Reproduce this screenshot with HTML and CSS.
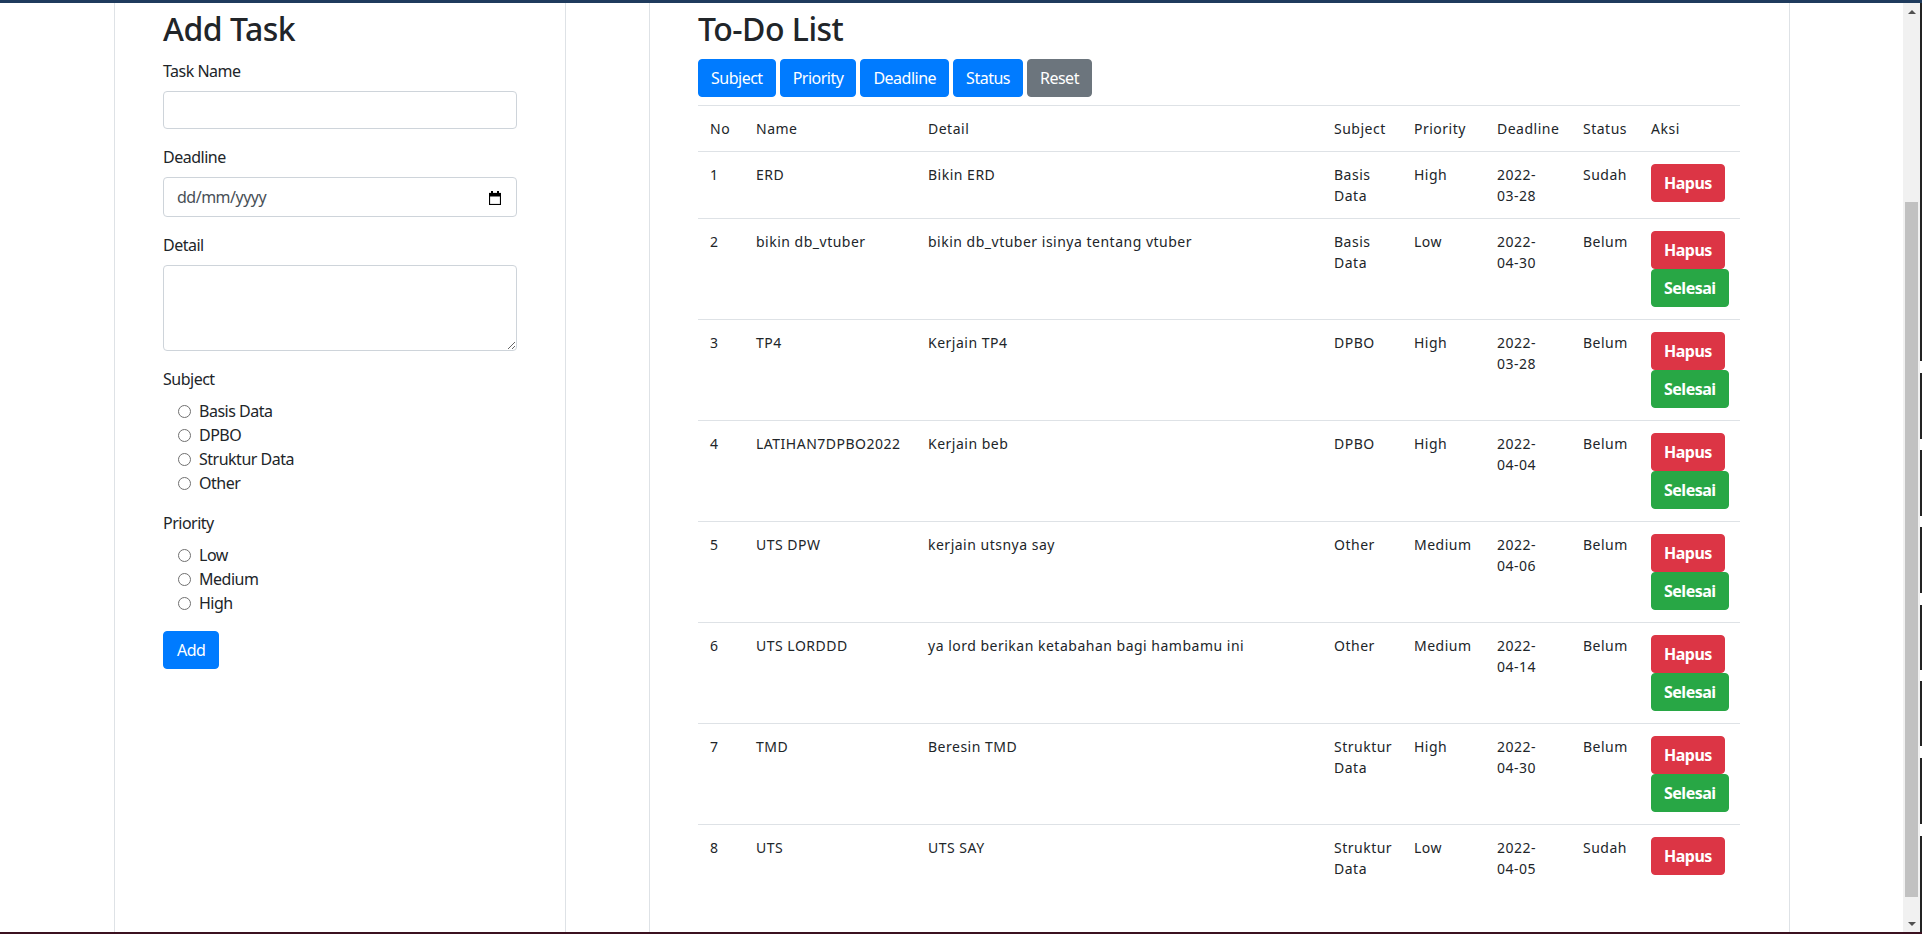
FILE: index.html
```html
<!DOCTYPE html>
<html lang="id">
<head>
<meta charset="utf-8">
<title>To-Do List</title>
<link rel="stylesheet" href="styles.css">
</head>
<body>
<div class="window">
  <div class="topbar"></div>
  <div class="middle">
    <div class="viewport">
      <div class="col col-left">
        <h2 class="title">Add Task</h2>
        <form class="form">
          <div class="form-group">
            <label class="label">Task Name</label>
            <input class="form-control" type="text">
          </div>
          <div class="form-group">
            <label class="label">Deadline</label>
            <div class="form-control date">
              <span class="date-ph">dd/mm/yyyy</span>
              <svg class="cal" width="12" height="14" viewBox="0 0 12 14"><rect x="2" y="0" width="2" height="3" fill="#000"/><rect x="8" y="0" width="2" height="3" fill="#000"/><rect x="0.5" y="2.5" width="11" height="11" fill="none" stroke="#000" stroke-width="1.2"/><rect x="0.5" y="2.5" width="11" height="3" fill="#000"/></svg>
            </div>
          </div>
          <div class="form-group">
            <label class="label">Detail</label>
            <textarea class="form-control textarea" rows="3"></textarea>
          </div>
          <div class="form-group">
            <div class="label">Subject</div>
            <label class="check"><input class="radio" type="radio" name="subject"><span>Basis Data</span></label>
            <label class="check"><input class="radio" type="radio" name="subject"><span>DPBO</span></label>
            <label class="check"><input class="radio" type="radio" name="subject"><span>Struktur Data</span></label>
            <label class="check"><input class="radio" type="radio" name="subject"><span>Other</span></label>
          </div>
          <div class="form-group">
            <div class="label">Priority</div>
            <label class="check"><input class="radio" type="radio" name="priority"><span>Low</span></label>
            <label class="check"><input class="radio" type="radio" name="priority"><span>Medium</span></label>
            <label class="check"><input class="radio" type="radio" name="priority"><span>High</span></label>
          </div>
          <button class="btn btn-primary btn-add" type="button">Add</button>
        </form>
      </div>
      <div class="col col-right">
        <h2 class="title">To-Do List</h2>
        <div class="toolbar">
          <button class="btn btn-primary" type="button">Subject</button>
          <button class="btn btn-primary" type="button">Priority</button>
          <button class="btn btn-primary" type="button">Deadline</button>
          <button class="btn btn-primary" type="button">Status</button>
          <button class="btn btn-secondary" type="button">Reset</button>
        </div>
        <table class="table">
          <colgroup>
            <col class="c-no"><col class="c-name"><col class="c-detail"><col class="c-subject"><col class="c-priority"><col class="c-deadline"><col class="c-status"><col class="c-aksi">
          </colgroup>
          <thead>
            <tr><th>No</th><th>Name</th><th>Detail</th><th>Subject</th><th>Priority</th><th>Deadline</th><th>Status</th><th>Aksi</th></tr>
          </thead>
          <tbody>
            <tr><td>1</td><td>ERD</td><td>Bikin ERD</td><td>Basis Data</td><td>High</td><td>2022-<span class="nw">03-28</span></td><td>Sudah</td><td><div class="actions"><button class="btn btn-bold btn-danger" type="button">Hapus</button></div></td></tr>
            <tr><td>2</td><td>bikin db_vtuber</td><td>bikin db_vtuber isinya tentang vtuber</td><td>Basis Data</td><td>Low</td><td>2022-<span class="nw">04-30</span></td><td>Belum</td><td><div class="actions"><button class="btn btn-bold btn-danger" type="button">Hapus</button><button class="btn btn-bold btn-success" type="button">Selesai</button></div></td></tr>
            <tr><td>3</td><td>TP4</td><td>Kerjain TP4</td><td>DPBO</td><td>High</td><td>2022-<span class="nw">03-28</span></td><td>Belum</td><td><div class="actions"><button class="btn btn-bold btn-danger" type="button">Hapus</button><button class="btn btn-bold btn-success" type="button">Selesai</button></div></td></tr>
            <tr><td>4</td><td>LATIHAN7DPBO2022</td><td>Kerjain beb</td><td>DPBO</td><td>High</td><td>2022-<span class="nw">04-04</span></td><td>Belum</td><td><div class="actions"><button class="btn btn-bold btn-danger" type="button">Hapus</button><button class="btn btn-bold btn-success" type="button">Selesai</button></div></td></tr>
            <tr><td>5</td><td>UTS DPW</td><td>kerjain utsnya say</td><td>Other</td><td>Medium</td><td>2022-<span class="nw">04-06</span></td><td>Belum</td><td><div class="actions"><button class="btn btn-bold btn-danger" type="button">Hapus</button><button class="btn btn-bold btn-success" type="button">Selesai</button></div></td></tr>
            <tr><td>6</td><td>UTS LORDDD</td><td>ya lord berikan ketabahan bagi hambamu ini</td><td>Other</td><td>Medium</td><td>2022-<span class="nw">04-14</span></td><td>Belum</td><td><div class="actions"><button class="btn btn-bold btn-danger" type="button">Hapus</button><button class="btn btn-bold btn-success" type="button">Selesai</button></div></td></tr>
            <tr><td>7</td><td>TMD</td><td>Beresin TMD</td><td>Struktur Data</td><td>High</td><td>2022-<span class="nw">04-30</span></td><td>Belum</td><td><div class="actions"><button class="btn btn-bold btn-danger" type="button">Hapus</button><button class="btn btn-bold btn-success" type="button">Selesai</button></div></td></tr>
            <tr><td>8</td><td>UTS</td><td>UTS SAY</td><td>Struktur Data</td><td>Low</td><td>2022-<span class="nw">04-05</span></td><td>Sudah</td><td><div class="actions"><button class="btn btn-bold btn-danger" type="button">Hapus</button></div></td></tr>
          </tbody>
        </table>
      </div>
    </div>
    <div class="scrollbar">
      <div class="sb-arrow"><span class="tri-up"></span></div>
      <div class="sb-track"><div class="sb-thumb"></div></div>
      <div class="sb-arrow"><span class="tri-down"></span></div>
    </div>
    <div class="edge"></div>
  </div>
  <div class="bottombar"></div>
</div>
</body>
</html>
```

FILE: styles.css
```css
* { box-sizing: border-box; }
html, body { margin: 0; height: 100%; }
body {
  font-family: "Noto Sans", "Open Sans", sans-serif;
  color: #212529;
  background: #fff;
  overflow: hidden;
  letter-spacing: -0.5px;
}
.window { display: flex; flex-direction: column; width: 1922px; height: 934px; }
.topbar { flex: none; height: 3px; background: #1f3b5d; }
.bottombar { flex: none; height: 2px; background: #3b1120; }
.middle { flex: 1; display: flex; min-height: 0; }
.viewport { flex: 1; display: flex; gap: 83px; padding-left: 114px; background: #fff; }

.col { border-left: 1px solid #dee2e6; border-right: 1px solid #dee2e6; padding: 7px 48px 0; }
.col-left { width: 452px; }
.col-right { width: 1141px; }

.title { font-size: 32px; font-weight: 500; line-height: 38.4px; margin: 0 0 11px; letter-spacing: -0.5px; }

.form-group { margin-bottom: 16px; }
.label { display: block; font-size: 16px; line-height: 24px; margin-bottom: 8px; }
.form-control {
  display: block; width: 100%; height: 38px; padding: 6px 12px;
  font: inherit; font-size: 16px; line-height: 24px; color: #495057;
  border: 1px solid #ced4da; border-radius: 4px; background: #fff;
}
.date { height: 40px; display: flex; align-items: center; justify-content: space-between; padding: 0 15px 0 13px; }
.date-ph { color: #495057; }
.cal { display: block; margin-top: 1px; }
.textarea { height: 86px; resize: vertical; }

.check { display: flex; align-items: center; height: 24px; padding-left: 15px; gap: 8px; font-size: 16px; line-height: 24px; }
.radio {
  appearance: none; -webkit-appearance: none; margin: 0;
  width: 13px; height: 13px; border: 1px solid #707070; border-radius: 50%; background: #fff; flex: none;
}

.btn {
  display: inline-block; font: inherit; font-size: 16px; line-height: 24px; letter-spacing: -0.5px;
  padding: 6px 12px; border: 1px solid transparent; border-radius: 4px; color: #fff; cursor: pointer;
}
.btn-add { padding: 6px 13px; }
.btn-primary { background: #007bff; border-color: #007bff; }
.btn-secondary { background: #6c757d; border-color: #6c757d; }
.btn-danger { background: #dc3545; border-color: #dc3545; }
.btn-success { background: #28a745; border-color: #28a745; }
.btn-bold { font-weight: 700; }

.toolbar { display: flex; gap: 4px; margin-bottom: 8px; }

.table { width: 1042px; table-layout: fixed; border-collapse: collapse; font-size: 14px; line-height: 21px; letter-spacing: 0.5px; }
.table th, .table td { padding: 12px; border-top: 1px solid #dee2e6; text-align: left; vertical-align: top; font-weight: 400; }
.nw { white-space: nowrap; }
.c-no { width: 46px; }
.c-name { width: 172px; }
.c-detail { width: 406px; }
.c-subject { width: 80px; }
.c-priority { width: 83px; }
.c-deadline { width: 86px; }
.c-status { width: 68px; }
.c-aksi { width: 101px; }
.actions { display: flex; flex-direction: column; align-items: flex-start; }

.scrollbar { flex: none; width: 17px; background: #f1f1f1; display: flex; flex-direction: column; }
.sb-arrow { flex: none; height: 17px; display: flex; align-items: center; justify-content: center; }
.sb-track { flex: 1; padding-top: 182px; }
.sb-thumb { height: 695px; margin: 0 2px; background: #c1c1c1; }
.tri-up { width: 0; height: 0; border-left: 4px solid transparent; border-right: 4px solid transparent; border-bottom: 4px solid #505050; }
.tri-down { width: 0; height: 0; border-left: 4px solid transparent; border-right: 4px solid transparent; border-top: 4px solid #505050; }
.edge {
  flex: none; width: 2px;
  background: linear-gradient(to bottom,
    #232323 0 358px, #fff 358px 370px, #232323 370px 436px, #fff 436px 447px,
    #232323 447px 513px, #fff 513px 524px, #232323 524px 590px, #fff 590px 602px,
    #232323 602px 667px, #fff 667px 678px, #232323 678px 743px, #fff 743px 755px,
    #232323 755px 821px, #fff 821px 833px, #232323 833px);
}
```
